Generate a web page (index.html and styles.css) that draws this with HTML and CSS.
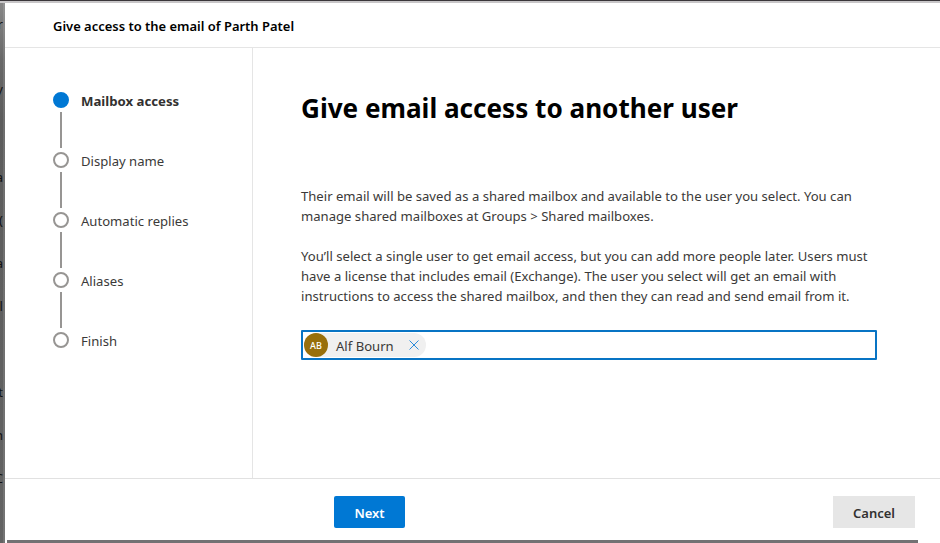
FILE: index.html
```html
<!DOCTYPE html>
<html lang="en">
<head>
<meta charset="utf-8">
<title>Mailbox access</title>
<link rel="stylesheet" href="styles.css">
</head>
<body>
<div class="backdrop">
<div class="behind"><span>r</span><span>y</span><span>a</span><span>(</span><span>a</span><span>l</span><span></span><span>t</span><span>n</span><span>C</span></div>
<section class="panel">
<header class="header">Give access to the email of Parth Patel</header>
<div class="body">
<nav class="steps">
<div class="step current"><i class="dot"></i><span>Mailbox access</span></div>
<div class="step"><i class="dot"></i><span>Display name</span></div>
<div class="step"><i class="dot"></i><span>Automatic replies</span></div>
<div class="step"><i class="dot"></i><span>Aliases</span></div>
<div class="step"><i class="dot"></i><span>Finish</span></div>
</nav>
<main class="content">
<h1>Give email access to another user</h1>
<p>Their email will be saved as a shared mailbox and available to the user you select. You can<br>manage shared mailboxes at Groups &gt; Shared mailboxes.</p>
<p class="details">You’ll select a single user to get email access, but you can add more people later. Users must<br>have a license that includes email (Exchange). The user you select will get an email with<br>instructions to access the shared mailbox, and then they can read and send email from it.</p>
<div class="picker"><div class="chip"><span class="avatar">AB</span><span class="name">Alf Bourn</span><svg class="remove" viewBox="0 0 10 10"><path d="M.5.5l9 9M9.500.5l-9 9"/></svg></div></div>
</main>
</div>
<footer class="footer"><button class="next">Next</button><button class="cancel">Cancel</button></footer>
<div class="scrollbar"></div>
</section>
</div>
</body>
</html>
```
FILE: styles.css
```css
* { box-sizing: border-box; }
body { margin: 0; font: 13.1px/20px "Noto Sans", sans-serif; color: #3b3a39; overflow: hidden; }
.backdrop { height: 543px; display: flex; background: linear-gradient(#3a363a 1px, #c8c6c8 1px, #c8c6c8 3px, transparent 3px), linear-gradient(90deg, transparent 3px, #ffffff1c 3px), linear-gradient(#888, #686868 60px, #5c5c5c 120px, #636363 100%); padding-top: 3px; }
.behind { width: 3px; margin-right: 2px; height: 540px; padding-top: 11px; overflow: hidden; color: #111; display: flex; flex-direction: column; align-items: flex-end; gap: 23px; }
.behind span { height: 20px; flex: none; }
.behind span:first-child { margin-bottom: 22px; }
.behind span:nth-child(2) { margin-bottom: 45px; }
.panel { flex: 1; height: 540px; background: #fff; display: flex; flex-direction: column; }
.header { height: 45px; padding: 13px 48px; border-bottom: 1px solid #e5e5e5; font-size: 12.96px; font-weight: 600; color: #000; }
.body { height: 431px; display: flex; border-bottom: 1px solid #e1e1e1; }
.steps { width: 248px; border-right: 1px solid #e5e5e5; padding: 42px 0 0 48px; }
.step { height: 60px; display: grid; grid-template: 20px 36px / 16px 1fr; column-gap: 12px; row-gap: 2px; align-items: center; }
.step span { padding-top: 2px; }
.dot { width: 16px; height: 16px; border: 2px solid #979593; border-radius: 50%; }
.current .dot { background: #0078d4; border-color: #0078d4; }
.current span { font-size: 13.2px; font-weight: 700; color: #323130; }
.step:not(:last-child)::after { content: ""; width: 2px; height: 36px; background: #979593; margin-left: 7px; }
.content { padding: 40px 0 0 48px; }
h1 { margin: 0 0 58px; font-size: 26.1px; line-height: 40px; font-weight: 700; color: #000; }
p { margin: 0 0 20px; white-space: nowrap; }
.details { letter-spacing: .01px; }
.picker { width: 576px; height: 30px; margin-top: 24px; border: 2px solid #0874c4; border-radius: 1px; padding: 1px; }
.chip { width: 122px; height: 24px; border-radius: 12px; background: #f0f0f0; display: flex; align-items: center; }
.avatar { width: 24px; height: 24px; border-radius: 50%; background: #986f0b; color: #fff; font: 500 9px/25px "Noto Sans", sans-serif; text-align: center; }
.name { margin-left: 8px; flex: 1; padding-top: 2px; }
.remove { width: 10px; height: 10px; margin-right: 7px; fill: none; stroke: #2b8cda; }
.footer { height: 62px; display: flex; align-items: center; padding: 4px 25px 0 329px; justify-content: space-between; }
.footer { padding-top: 3px; }
button { border: 0; border-radius: 2px; height: 32px; font: 600 13px/20px "Noto Sans", sans-serif; padding: 2px 0 0; }
.next { width: 71px; background: #0078d4; color: #fff; }
.cancel { width: 82px; border-radius: 0; background: #e6e6e6; color: #323130; }
.scrollbar { width: 911px; height: 3px; margin: -1px 0 0 2px; background: #737173; }
```
